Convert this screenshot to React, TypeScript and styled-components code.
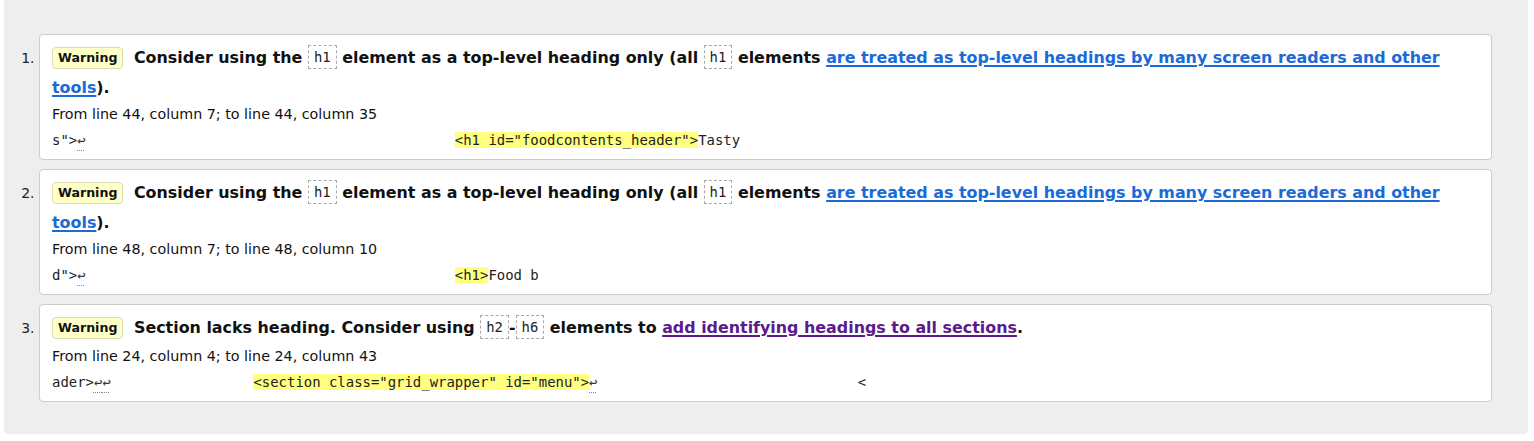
import React from "react";
import styled, { createGlobalStyle } from "styled-components";

const Global = createGlobalStyle`
  html, body { margin: 0; padding: 0; background: #fff; }
  body { font-family: "DejaVu Sans", Verdana, sans-serif; color: #111; }
`;

const Panel = styled.div`
  margin: 0 6px 0 4px;
  background: #eeeeee;
  border-radius: 0 0 4px 4px;
  padding: 34px 36px 32px 35px;
`;

const List = styled.ol`
  margin: 0;
  padding: 0;
  list-style: decimal outside;
`;

const Item = styled.li`
  background: #fff;
  border: 1px solid #cccccc;
  border-radius: 4px;
  padding: 9px 12px 5px;
  margin-bottom: 9px;
  font-size: 14px;
  &:last-child { margin-bottom: 0; }
  &::marker { color: #222; font-size: 14px; }
`;

const Message = styled.p`
  margin: 0;
  font-size: 15.9px;
  font-weight: bold;
  line-height: 28px;
  color: #111;
`;

const Badge = styled.span`
  display: inline-block;
  vertical-align: 1px;
  box-sizing: border-box;
  height: 22px;
  line-height: 20px;
  padding: 0 5px;
  margin-right: 5px;
  margin-bottom: 5px;
  font-size: 12.6px;
  font-weight: bold;
  background: #ffffc8;
  border: 1px solid #dcdcb4;
  border-radius: 4px;
  color: #111;
`;

const Code = styled.code`
  display: inline-block;
  vertical-align: 1px;
  margin-bottom: 5px;
  box-sizing: border-box;
  height: 24px;
  line-height: 22px;
  padding: 0 5px;
  border: 1px dashed #aaa;
  font-family: "DejaVu Sans Mono", monospace;
  font-size: 13.9px;
  font-weight: normal;
  color: #222;
`;

const Link = styled.a<{ $visited?: boolean }>`
  color: ${(p) => (p.$visited ? "#5b1a8e" : "#1b6ad6")};
  text-decoration: underline;
  text-decoration-thickness: 2px;
  text-underline-offset: 2px;
`;

const Location = styled.p`
  margin: 0;
  font-size: 14.3px;
  line-height: 25px;
  color: #111;
`;

const Extract = styled.p`
  margin: 0;
  line-height: 27px;
  font-family: "DejaVu Sans Mono", monospace;
  font-size: 13.95px;
  white-space: pre;
  color: #222;
`;

const Mark = styled.mark`
  background: #ffff80;
  color: #222;
`;

const LineFeed = styled.span`
  color: #333;
  text-decoration: underline dotted #888;
  text-decoration-thickness: 1px;
  text-underline-offset: 5px;
`;

const LF = () => <LineFeed>↩</LineFeed>;

const sp = (n: number) => " ".repeat(n);

export default function App() {
  return (
    <>
      <Global />
      <Panel>
        <List>
          <Item>
            <Message>
              <Badge>Warning</Badge> Consider using the <Code>h1</Code> element as a top-level
              heading only (all <Code>h1</Code> elements{" "}
              <Link href="#">are treated as top-level headings by many screen readers and other tools</Link>).
            </Message>
            <Location>From line 44, column 7; to line 44, column 35</Location>
            <Extract>
              {'s">'}
              <LF />
              {sp(44)}
              <Mark>{'<h1 id="foodcontents_header">'}</Mark>
              {"Tasty"}
            </Extract>
          </Item>
          <Item>
            <Message>
              <Badge>Warning</Badge> Consider using the <Code>h1</Code> element as a top-level
              heading only (all <Code>h1</Code> elements{" "}
              <Link href="#">are treated as top-level headings by many screen readers and other tools</Link>).
            </Message>
            <Location>From line 48, column 7; to line 48, column 10</Location>
            <Extract>
              {'d">'}
              <LF />
              {sp(44)}
              <Mark>{"<h1>"}</Mark>
              {"Food b"}
            </Extract>
          </Item>
          <Item>
            <Message>
              <Badge>Warning</Badge> Section lacks heading. Consider using <Code>h2</Code>-<Code>h6</Code>{" "}
              elements to <Link href="#" $visited>add identifying headings to all sections</Link>.
            </Message>
            <Location>From line 24, column 4; to line 24, column 43</Location>
            <Extract>
              {"ader>"}
              <LF />
              <LF />
              {sp(17)}
              <Mark>{'<section class="grid_wrapper" id="menu">'}</Mark>
              <LF />
              {sp(31)}
              {"<"}
            </Extract>
          </Item>
        </List>
      </Panel>
    </>
  );
}
